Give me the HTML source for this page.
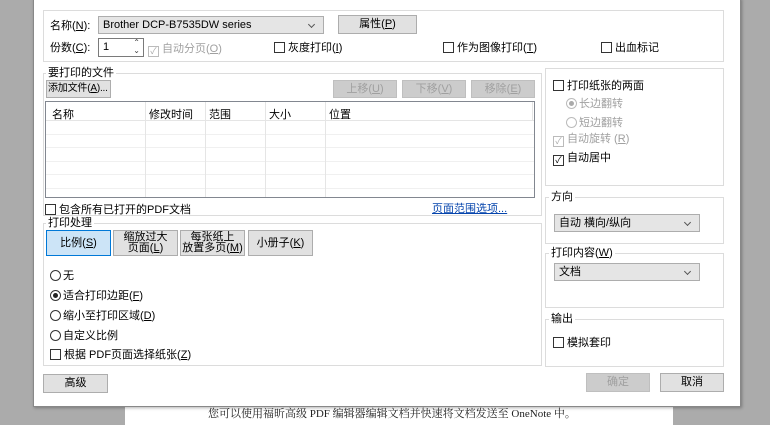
<!DOCTYPE html>
<html><head><meta charset="utf-8"><style>
*{margin:0;padding:0;box-sizing:border-box}
body{width:770px;height:425px;overflow:hidden;background:#ababab;font-family:"Liberation Sans","Noto Sans CJK SC",sans-serif;font-size:11px;color:#000;position:relative}
.a{position:absolute;white-space:nowrap}
.grp{position:absolute;border:1px solid #dcdcdc}
.lbl{position:absolute;background:#fff;padding:0 2px;line-height:13px}
.btn{position:absolute;background:#e1e1e1;border:1px solid #adadad;text-align:center;line-height:16px;white-space:nowrap;overflow:hidden}
.dis{color:#a0a0a0;background:#cccccc;border-color:#bfbfbf}
.cb{display:inline-block;width:11px;height:11px;border:1px solid #333;background:#fff;vertical-align:-2px;margin-right:3px;position:relative}
.rb{display:inline-block;width:11px;height:11px;border:1px solid #333;border-radius:50%;background:#fff;vertical-align:-2px;margin-right:2px;position:relative}
.combo{position:absolute;background:#e5e5e5;border:1px solid #adadad;line-height:16px;padding-left:4px}
.combo:after{content:"";position:absolute;right:9px;top:5px;width:4px;height:4px;border-right:1px solid #555;border-bottom:1px solid #555;transform:rotate(45deg)}
u{text-decoration:underline}
</style></head><body>
<div class="a" style="left:125px;top:400px;width:548px;height:25px;background:#fff"></div>
<div class="a" style="left:208px;top:405px;font-family:'Liberation Serif','Noto Serif CJK SC',serif;font-size:11px;color:#222">您可以使用福昕高级 PDF 编辑器编辑文档并快速将文档发送至 OneNote 中。</div>
<div class="a" style="left:33px;top:-2px;width:708px;height:409px;background:#fff;border:1px solid #888;box-shadow:1px 1px 3px rgba(0,0,0,.3)"></div>

<div class="grp" style="left:43px;top:10px;width:681px;height:52px"></div>
<div class="a" style="left:50px;top:17px">名称(<u>N</u>):</div>
<div class="combo" style="left:98px;top:16px;width:226px;height:18px">Brother DCP-B7535DW series</div>
<div class="btn" style="left:338px;top:15px;width:79px;height:19px">属性(<u>P</u>)</div>
<div class="a" style="left:50px;top:39px">份数(<u>C</u>):</div>
<div class="a" style="left:98px;top:38px;width:46px;height:19px;border:1px solid #7a7a7a;padding-left:4px;line-height:16px">1<span style="position:absolute;right:3px;top:0px;font-size:8px;line-height:8px;color:#444">⌃<br>⌄</span></div>
<div class="a" style="left:148px;top:40px;color:#a0a0a0"><span class="cb" style="border-color:#bbb;color:#aaa;font-size:9px;line-height:9px;text-align:center">✓</span>自动分页(<u>O</u>)</div>
<div class="a" style="left:274px;top:39px"><span class="cb"></span>灰度打印(<u>I</u>)</div>
<div class="a" style="left:443px;top:39px"><span class="cb"></span>作为图像打印(<u>T</u>)</div>
<div class="a" style="left:601px;top:39px"><span class="cb"></span>出血标记</div>

<div class="grp" style="left:43px;top:73px;width:499px;height:143px"></div>
<div class="lbl" style="left:46px;top:67px">要打印的文件</div>
<div class="btn" style="left:46px;top:80px;width:65px;height:18px;text-align:left;padding-left:1px;font-size:10px;letter-spacing:-0.2px">添加文件(<u>A</u>)...</div>
<div class="btn dis" style="left:333px;top:80px;width:64px;height:18px">上移(<u>U</u>)</div>
<div class="btn dis" style="left:402px;top:80px;width:64px;height:18px">下移(<u>V</u>)</div>
<div class="btn dis" style="left:471px;top:80px;width:64px;height:18px">移除(<u>E</u>)</div>
<div class="a" style="left:45px;top:101px;width:490px;height:97px;border:1px solid #828790;background:#fff;overflow:hidden">
<div class="a" style="left:0;top:0;width:100%;height:19px;border-bottom:1px solid #e5e5e5"></div>
<div class="a" style="left:0;top:32px;width:100%;border-top:1px solid #f0f0f0"></div>
<div class="a" style="left:0;top:45px;width:100%;border-top:1px solid #f0f0f0"></div>
<div class="a" style="left:0;top:59px;width:100%;border-top:1px solid #f0f0f0"></div>
<div class="a" style="left:0;top:72px;width:100%;border-top:1px solid #f0f0f0"></div>
<div class="a" style="left:0;top:86px;width:100%;border-top:1px solid #f0f0f0"></div>
<div class="a" style="left:99px;top:0;height:100%;border-left:1px solid #e5e5e5"></div>
<div class="a" style="left:159px;top:0;height:100%;border-left:1px solid #e5e5e5"></div>
<div class="a" style="left:219px;top:0;height:100%;border-left:1px solid #e5e5e5"></div>
<div class="a" style="left:279px;top:0;height:100%;border-left:1px solid #e5e5e5"></div>
<div class="a" style="left:486px;top:0;height:19px;border-left:1px solid #e5e5e5"></div>
<div class="a" style="left:6px;top:4px">名称</div>
<div class="a" style="left:103px;top:4px">修改时间</div>
<div class="a" style="left:163px;top:4px">范围</div>
<div class="a" style="left:223px;top:4px">大小</div>
<div class="a" style="left:283px;top:4px">位置</div>
</div>
<div class="a" style="left:45px;top:201px"><span class="cb"></span>包含所有已打开的PDF文档</div>
<div class="a" style="left:432px;top:200px;color:#0645ad;text-decoration:underline">页面范围选项...</div>

<div class="grp" style="left:43px;top:223px;width:499px;height:143px"></div>
<div class="lbl" style="left:46px;top:217px">打印处理</div>
<div class="btn" style="left:46px;top:230px;width:65px;height:26px;line-height:24px;background:#cce4f7;border-color:#0078d7">比例(<u>S</u>)</div>
<div class="btn" style="left:113px;top:230px;width:65px;height:26px;line-height:11px;padding-top:1px">缩放过大<br>页面(<u>L</u>)</div>
<div class="btn" style="left:180px;top:230px;width:65px;height:26px;line-height:11px;padding-top:1px">每张纸上<br>放置多页(<u>M</u>)</div>
<div class="btn" style="left:248px;top:230px;width:65px;height:26px;line-height:24px">小册子(<u>K</u>)</div>
<div class="a" style="left:50px;top:267px"><span class="rb"></span>无</div>
<div class="a" style="left:50px;top:287px"><span class="rb"><span style="position:absolute;left:2px;top:2px;width:5px;height:5px;border-radius:50%;background:#222"></span></span>适合打印边距(<u>F</u>)</div>
<div class="a" style="left:50px;top:307px"><span class="rb"></span>缩小至打印区域(<u>D</u>)</div>
<div class="a" style="left:50px;top:327px"><span class="rb"></span>自定义比例</div>
<div class="a" style="left:50px;top:346px"><span class="cb"></span>根据 PDF页面选择纸张(<u>Z</u>)</div>
<div class="btn" style="left:43px;top:374px;width:65px;height:19px">高级</div>

<div class="grp" style="left:545px;top:68px;width:179px;height:118px"></div>
<div class="a" style="left:553px;top:77px"><span class="cb"></span>打印纸张的两面</div>
<div class="a" style="left:566px;top:95px;color:#a0a0a0"><span class="rb" style="border-color:#bbb"><span style="position:absolute;left:2px;top:2px;width:5px;height:5px;border-radius:50%;background:#aaa"></span></span>长边翻转</div>
<div class="a" style="left:566px;top:114px;color:#a0a0a0"><span class="rb" style="border-color:#bbb"></span>短边翻转</div>
<div class="a" style="left:553px;top:130px;color:#a0a0a0"><span class="cb" style="border-color:#bbb;color:#aaa;font-size:9px;line-height:9px;text-align:center">✓</span>自动旋转 (<u>R</u>)</div>
<div class="a" style="left:553px;top:149px"><span class="cb" style="font-size:9px;line-height:9px;text-align:center">✓</span>自动居中</div>

<div class="grp" style="left:545px;top:197px;width:179px;height:47px"></div>
<div class="lbl" style="left:549px;top:191px">方向</div>
<div class="combo" style="left:554px;top:214px;width:146px;height:18px">自动 横向/纵向</div>
<div class="grp" style="left:545px;top:253px;width:179px;height:55px"></div>
<div class="lbl" style="left:549px;top:247px">打印内容(<u>W</u>)</div>
<div class="combo" style="left:554px;top:263px;width:146px;height:18px">文档</div>
<div class="grp" style="left:545px;top:319px;width:179px;height:48px"></div>
<div class="lbl" style="left:549px;top:313px">输出</div>
<div class="a" style="left:553px;top:334px"><span class="cb"></span>模拟套印</div>
<div class="btn dis" style="left:586px;top:373px;width:64px;height:19px">确定</div>
<div class="btn" style="left:660px;top:373px;width:64px;height:19px">取消</div>
</body></html>
